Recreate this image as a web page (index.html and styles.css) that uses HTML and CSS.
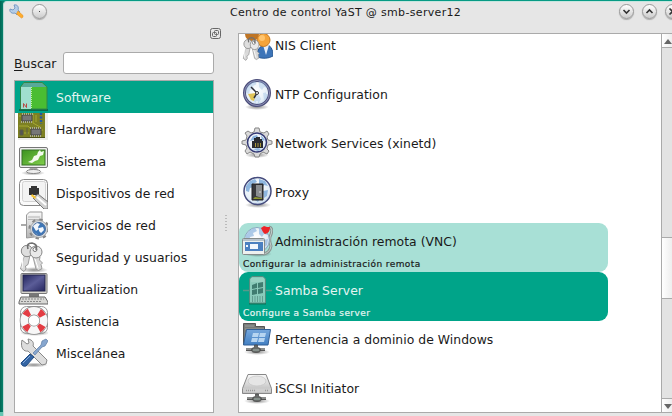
FILE: index.html
```html
<!DOCTYPE html>
<html lang="es">
<head>
<meta charset="utf-8">
<title>Centro de control YaST</title>
<link rel="stylesheet" href="styles.css">
</head>
<body>
<svg class="defs" aria-hidden="true">
  <defs>
    <linearGradient id="metal" x1="0" y1="0" x2="0" y2="1"><stop offset="0" stop-color="#fafafa"/><stop offset="1" stop-color="#b4b4b4"/></linearGradient>
    <linearGradient id="green" x1="0" y1="0" x2="1" y2="1"><stop offset="0" stop-color="#3c9220"/><stop offset="1" stop-color="#82cf4b"/></linearGradient>
    <linearGradient id="navy" x1="0" y1="0" x2="1" y2="1"><stop offset="0" stop-color="#22245c"/><stop offset=".5" stop-color="#5b5d98"/><stop offset="1" stop-color="#25265f"/></linearGradient>
    <linearGradient id="sky" x1="0" y1="0" x2="0" y2="1"><stop offset="0" stop-color="#76a7dc"/><stop offset="1" stop-color="#4380c3"/></linearGradient>
    <radialGradient id="shadow"><stop offset="0" stop-color="#000" stop-opacity=".45"/><stop offset="1" stop-color="#000" stop-opacity="0"/></radialGradient>
    <radialGradient id="globe" cx=".45" cy=".4" r=".75"><stop offset="0" stop-color="#fff"/><stop offset=".6" stop-color="#e6eff7"/><stop offset="1" stop-color="#a5c4e4"/></radialGradient>
    <g id="keys">
      <path d="M9 12 4.500 28 8 30.500 10 28 9.500 25 12 23.500 14 14zM16 12l4 16 2.500 1.500 3.500-2-1-4 1.500-1.500-3-3 .5-3-2.500-5z" fill="#d9d9d9" stroke="#888" stroke-width=".8"/>
      <path d="M7 15 6 27M18 15l4 12" stroke="#fff"/>
      <circle cx="11" cy="10" r="5.700" fill="#dedede" stroke="#888"/><circle cx="20" cy="11" r="6" fill="#e9e9e9" stroke="#888"/>
      <circle cx="19" cy="8.500" r="2" fill="#fff" stroke="#777"/><path d="M12 8q-2-6 4-6 6 1 4 7" fill="none" stroke="#707070" stroke-width="1.700"/>
    </g>
    <g id="land" fill="#8eb6df"><path d="M5 12l4-5 5-2 2 3-4 2 1 3-4 1-1 4-3-1zM18 5l6 2 3 5-4-1-2 3-3-3zM11 20l7-1 2 4-3 5-5-3zM22 17l5-1-1 6-3 2z"/></g>
    <g id="plug"><path d="M7 28.500h19" stroke="#555" stroke-width="3"/><path d="M7 28h19" stroke="#c5c9c6"/><path d="M15.500 24h3v2.500q3 0 3 2.500t-4.500 2.500-4.500-2.500 3-2.500z" fill="#676b69" stroke="#444" stroke-width=".7"/><path d="M14 29h6" stroke="#a4b5ad"/></g>
  </defs>
</svg>
<div class="desktop">
<main class="window">
  <header class="titlebar">
    <svg class="app-icon" viewBox="0 0 16 16"><path d="M1 5l3 1 2-2-1-3c4-1 5 3 4 5l2 2-3 3-2-2C3 10 0 8 1 5z" fill="#b5cde7" stroke="#668dbb" stroke-width=".8"/><path d="M9 7l5 4.500q.5 2-1.500 2.500L7.500 10z" fill="#ffad2d" stroke="#e88d16" stroke-width=".6"/></svg>
    <span class="round-button"><i class="dot"></i></span>
    <h1>Centro de control YaST @ smb-server12</h1>
    <span class="round-button minimize"><svg viewBox="0 0 15 15"><path d="M4.500 6l3 3 3-3"/></svg></span>
    <span class="round-button maximize"><svg viewBox="0 0 15 15"><path d="M4.500 9l3-3 3 3"/></svg></span>
    <span class="round-button close"><svg viewBox="0 0 15 15"><path d="M4.500 4.500l6 6M10.500 4.500l-6 6"/></svg></span>
  </header>
  <div class="content">
    <aside class="sidebar">
      <div class="dock"><svg viewBox="0 0 11 11"><rect x=".5" y=".5" width="10" height="10" rx="2"/><rect x="4.500" y="2.500" width="4" height="4" rx="1"/><rect x="2.500" y="4.500" width="4" height="4" rx="1"/></svg></div>
      <label class="search"><span class="search-label"><u>B</u>uscar</span><input type="text"></label>
      <ul class="groups">
        <li class="active"><svg viewBox="0 0 32 32"><path d="M3 28h30v2H3z" fill="#086b4d"/><path d="M4.500 6 8 1.500h18L31 6v22H4.500z" fill="#4abd32" stroke="#318647"/><path d="M5 6 8 2h18l4.500 4z" fill="#59a999"/><path d="M5 6h10v22H5z" fill="#a0dfce"/><path d="M15.500 6v22" stroke="#c4ee9b" stroke-dasharray="1 1"/><path d="M7.500 26.500v-4l3 4v-4" fill="none" stroke="#b74c45"/></svg>Software</li>
        <li><svg viewBox="0 0 32 32"><path d="M2 0h30v27H2z" fill="#ededea"/><path d="M2 0h27v25H2z" fill="#7d8023"/><path d="M3 13h9l4 4h11M17 1v9l7 4M3 3h2M20 2v7M13 20H8" stroke="#a7aa32" fill="none"/><path d="M2 24.500h27" stroke="#4e5219"/><path d="M6 2h10v6H6zM15 16h10v6H15z" fill="#777" stroke="#444"/><path d="M6 1h11M5 9h11M14 15h12M14 23h12" stroke="#bbb" stroke-width="1.500" stroke-dasharray="1 1"/><path d="M25 0v11" stroke="#2457a2" stroke-width="2.500" stroke-dasharray="2 1.500"/><path d="M4 17h3v5H4zM11 15v6" fill="#555" stroke="#5d5d42"/></svg>Hardware</li>
        <li><svg viewBox="0 0 32 32"><ellipse cx="17" cy="28" rx="12" ry="2.500" fill="url(#shadow)"/><path d="M14 22h7l1 4H13z" fill="#aaa"/><ellipse cx="17.500" cy="26.500" rx="7" ry="2" fill="#eee" stroke="#888"/><rect x="3.500" y="2.500" width="28" height="20" rx="1.500" fill="#eee" stroke="#777"/><rect x="6" y="5" width="23" height="15" fill="url(#green)" stroke="#367127"/><path d="M12 17l4-2 2-4 3-1 1-3 2-2 1 2 3-1-1 4-3 1-2 4-3 1-3 2z" fill="#f4fbef"/></svg>Sistema</li>
        <li><svg viewBox="0 0 32 32"><rect x="3.500" y="2.500" width="28" height="26" rx="4" fill="#fafafa" stroke="#888"/><rect x="6.500" y="4.500" width="23" height="20" rx="2" fill="#f3f3f3" stroke="#d2d2d2"/><path d="M13 18v-7h2V9h6v2h2v7z" fill="#333"/><path d="m17 21 5-4 10 8v7h-4z" fill="#d0d0d0" stroke="#777"/><path d="m21 20 9 8" stroke="#fff" stroke-width="2"/><path d="m15 19 4 3 1-2-4-3z" fill="#f7c635"/></svg>Dispositivos de red</li>
        <li><svg viewBox="0 0 32 32"><path d="M5 16h8" stroke="#aaa" stroke-width="2"/><path d="M10.500 29V6l3-3H26v24z" fill="url(#metal)" stroke="#999"/><path d="M12 8h12M12 10.500h12M12 18h9" stroke="#b5b5b5"/><circle cx="23" cy="20" r="9" fill="#d5d7da" stroke="#888" stroke-width="3" stroke-dasharray="3.200 3.870"/><circle cx="23" cy="20" r="8.500" fill="#d9dde2" stroke="#999" stroke-width=".7"/><circle cx="23" cy="20" r="6.500" fill="#3d76b7" stroke="#4f71a0"/><path d="m17 17 4-3 3 1-2 3 1 2-3 2zM23 19l4-1 1 3-3 3-2-2zM18 23l3 2 1 1" fill="#f1f6fc"/></svg>Servicios de red</li>
        <li><svg viewBox="0 0 32 32"><ellipse cx="18" cy="29" rx="14" ry="3" fill="url(#shadow)"/><use href="#keys"/></svg>Seguridad y usuarios</li>
        <li><svg viewBox="0 0 32 32"><path d="M13 20h10v4H13z" fill="#777"/><rect x="5" y=".5" width="26" height="20" rx="1" fill="#d6d4cc" stroke="#777"/><rect x="7" y="2" width="22" height="16" fill="url(#navy)" stroke="#22244c"/><path d="M5 24h24l3 5v2H3v-2z" fill="#d8d8d5" stroke="#666"/><path d="M6 26h22M5 28.500h20" stroke="#888" stroke-dasharray="2 1"/></svg>Virtualization</li>
        <li><svg viewBox="0 0 32 32"><ellipse cx="19" cy="28" rx="15" ry="3" fill="url(#shadow)"/><rect x="4.500" y="1.500" width="27" height="27" rx="6" fill="none" stroke="#999"/><circle cx="18" cy="15.500" r="9.800" fill="none" stroke="#8c8c8c" stroke-width="9"/><circle cx="18" cy="15.500" r="9.800" fill="none" stroke="#f7f7f7" stroke-width="7.500"/><circle cx="18" cy="15.500" r="9.800" fill="none" stroke="#e33c43" stroke-width="7" stroke-dasharray="5.400 9.994" stroke-dashoffset="-5"/></svg>Asistencia</li>
        <li><svg viewBox="0 0 32 32"><ellipse cx="18" cy="28" rx="14" ry="2.500" fill="url(#shadow)"/><path d="m6 3 5 4 2-1-1-4c5 1 6 4 5 7l14 14-1 4-4 1-14-14C8 15 4 11 6 3z" fill="#ddd" stroke="#888"/><path d="m17 16 8-8 1-4 4-2 2 2-3 5-3 1-7 8z" fill="#86a6cf" stroke="#5f7da3" stroke-width=".7"/><path d="m14 17 4 3-8 9q-4 1-5-3z" fill="#3465a4" stroke="#204b83"/><path d="m14 19-7 7" stroke="#86abdc"/></svg>Miscelánea</li>
      </ul>
    </aside>
    <div class="splitter"><i></i></div>
    <section class="panel">
      <ul class="modules">
        <li><div class="module-title"><svg viewBox="0 0 32 34"><circle cx="11" cy="7" r="7" fill="#bf7525"/><path d="M16 30q0-12 9-12 7 0 7 11-7 4-16 1z" fill="#3c74b8" stroke="#285893"/><path d="m22 18 3 10 3-10z" fill="#e7eef8"/><circle cx="22.500" cy="13" r="6.500" fill="#f5a43a" stroke="#c77a20"/><circle cx="21" cy="11" r="3" fill="#ffc46d"/><g transform="translate(-1 9) scale(.73 .8)"><use href="#keys"/></g></svg><span>NIS Client</span></div></li>
        <li><div class="module-title"><svg viewBox="0 0 32 34"><ellipse cx="16" cy="31" rx="12" ry="3" fill="url(#shadow)"/><circle cx="16" cy="17" r="12.500" fill="url(#globe)" stroke="#4c4f7b" stroke-width="3"/><circle cx="16" cy="17" r="12.500" fill="none" stroke="#9093b8"/><use href="#land" opacity=".35"/><path d="m15 17-8 1 3 6 3 1z" fill="#dfc357"/><path d="m10 11 6 6-3 5" fill="none" stroke="#303039" stroke-width="1.500"/><circle cx="16" cy="17" r="1.500" fill="#fff" stroke="#333"/><path d="M16 7v2M16 25v2M25 17h2" stroke="#fff"/></svg><span>NTP Configuration</span></div></li>
        <li><div class="module-title"><svg viewBox="0 0 32 34"><ellipse cx="16" cy="30" rx="12" ry="3" fill="url(#shadow)"/><path d="m13 7 1-4h4l1 4 4 1 3-2 2 3-2 3 1 3 4 1v3l-4 1-1 4 2 2-2 3-4-2-3 2-1 3h-4l-1-3-4-2-3 2-2-3 2-3-1-3-4-1v-3l4-1 1-4-2-3 3-2 3 2z" fill="#dadada" stroke="#858585"/><circle cx="16" cy="17.500" r="9.500" fill="url(#globe)" stroke="#343974" stroke-width="1.500"/><path d="m9 16 3-5 4-1 1 2-4 3zM20 10l4 5-3 1zM12 24l5-1 3 1-3 2z" fill="#8eb6df"/><path d="M11 23v-7h2v-3h2v-1h4v2h2v2h1v7z" fill="#282b30"/><path d="M14.500 18v4M17 18v4M19.500 18v4" stroke="#a7973c"/></svg><span>Network Services (xinetd)</span></div></li>
        <li><div class="module-title"><svg viewBox="0 0 32 34"><ellipse cx="17" cy="31" rx="13" ry="3" fill="url(#shadow)"/><circle cx="16.500" cy="17" r="13.500" fill="url(#globe)" stroke="#464c7d" stroke-width="1.500"/><use href="#land"/><path d="M11 10h11v16H11z" fill="#38393d" stroke="#242526"/><path d="m15 11 6 0v13l-6-2z" fill="#8a8d90"/><path d="m14 23 7 1v1h-9z" fill="#8d9731"/><path d="M19 17v2" stroke="#ddd"/></svg><span>Proxy</span></div></li>
        <li class="hover"><div class="module-title"><svg viewBox="0 0 32 34"><ellipse cx="17" cy="31" rx="14" ry="3" fill="url(#shadow)"/><path d="M28 4q5 1 1 10-1 4 1 9-1 7-8 8" fill="none" stroke="#8a9793" stroke-width="3"/><path d="M28 4q5 1 1 10-1 4 1 9-1 7-8 8" fill="none" stroke="#c2cecb"/><circle cx="16" cy="17" r="12.500" fill="url(#globe)" stroke="#88a6bd"/><use href="#land" opacity=".7"/><path d="m20 5 3-2 3 1 3 0q0 6-5 7-2-1-4-6z" fill="#ec2428"/><rect x="1.500" y="15.500" width="22" height="16" rx="1" fill="#edf0ef" stroke="#858c8c"/><path d="M2 17h21" stroke="#8296aa"/><path d="M4 19h18v9H4z" fill="#4c80c0"/><path d="M5 22h2v2H5zM9 21h8v5H9z" fill="#f3f7fd"/></svg><span>Administración remota (VNC)</span></div><p>Configurar la administración remota</p></li>
        <li class="selected"><div class="module-title"><svg viewBox="0 0 32 34"><path d="M2 18.500h7M24 18.500h7" stroke="#56998b" stroke-width="1.500"/><path d="M8 31h17" stroke="#087257" stroke-width="3"/><path d="m8.500 7 2.500-2.500h11L24.500 7v24h-16z" fill="#8acbbb" stroke="#558d80"/><path d="M10 7h13M10 9h13" stroke="#a6d9cb"/><path d="m11 13 5-2v5l-5 1zM17 11l5-1v5l-5 1zM11 18l5-1v5l-5 1zM17 17l5-1v5l-5 1z" fill="#3f7c70"/><path d="M11.500 24v6M14 24v6M16.500 24v6M19 24v6M21.500 24v6" stroke="#639d90"/></svg><span>Samba Server</span></div><p>Configure a Samba server</p></li>
        <li><div class="module-title"><svg viewBox="0 0 32 34"><ellipse cx="16" cy="31" rx="13" ry="3" fill="url(#shadow)"/><path d="M2.500 24V2.500h12v3h9V12" fill="#777b79" stroke="#555"/><path d="M4 5h9M4 8h19" stroke="#9a9d9b"/><path d="M5.500 8.500h24L27 24H2.500z" fill="url(#sky)" stroke="#315f96"/><path d="m12 12 6 0-1 4h-6zM19 12h6l-1 4h-6zM11 17h6l-1 4h-6zM18 17h6l-1 4h-6z" fill="#b7d5f1"/><g transform="translate(-2 0)"><use href="#plug"/></g></svg><span>Pertenencia a dominio de Windows</span></div></li>
        <li><div class="module-title"><svg viewBox="0 0 32 34"><ellipse cx="16" cy="31" rx="13" ry="3" fill="url(#shadow)"/><path d="m7 4.500h18l5.500 14v5H1.500v-5z" fill="url(#metal)" stroke="#888"/><ellipse cx="16" cy="11" rx="9" ry="5" fill="#e5e5e5" stroke="#c4c4c4" stroke-width=".7"/><path d="M2 18.500h28v4H2z" fill="#cfcfcf"/><path d="M5 20.500h9M24 20.500h4" stroke="#999" stroke-width="1.500" stroke-dasharray="1 1"/><g transform="translate(-1 0)"><use href="#plug"/></g></svg><span>iSCSI Initiator</span></div></li>
      </ul>
      <div class="scrollbar">
        <div class="arrow"><svg viewBox="0 0 8 5"><path d="M0 5 4 0l4 5z"/></svg></div>
        <div class="track-top"></div><div class="thumb"></div><div class="track-bottom"></div>
        <div class="arrow down"><svg viewBox="0 0 8 5"><path d="M0 0 4 5l4-5z"/></svg></div>
      </div>
    </section>
  </div>
</main>
</div>
</body>
</html>
```
FILE: styles.css
```css
* { box-sizing: border-box; }
body { margin: 0; width: 672px; height: 416px; overflow: hidden; font: 12.4px "DejaVu Sans", sans-serif; letter-spacing: .03px; color: #1a1a1a; }
ul, h1, p { margin: 0; padding: 0; list-style: none; }
svg { display: block; flex: none; }
.defs { width: 0; height: 0; position: absolute; }
.desktop { width: 672px; height: 416px; padding: 1px 0 0 3px; background: linear-gradient(#079a84 0 1px, transparent 1px 412px, #66c5b2 412px), linear-gradient(90deg, #006653, #07806b 3px, #079a84 12px); }
.window { height: 415px; overflow: hidden; background: #e6e6e6; border-top: 1px solid #c5e6df; border-left: 1px solid #bad9d3; border-radius: 4px 0 0; }
.titlebar { height: 22px; display: flex; align-items: flex-start; padding: 2px 0 0 5px; }
.app-icon { width: 16px; height: 16px; }
.round-button { flex: none; display: block; width: 15px; height: 15px; margin: 0 0 0 7px; border-radius: 50%; background: linear-gradient(#fff, #ccc); border: 1px solid #999; box-shadow: 0 1px 1px #aaa; }
.round-button svg { width: 15px; height: 15px; margin: -1px; fill: none; stroke: #333; stroke-width: 1.6; }
.dot { display: block; width: 1px; height: 1px; margin: 6px; background: #444; }
h1 { flex: none; width: 231px; margin-left: 183px; font-size: 11px; letter-spacing: .33px; line-height: 17px; font-weight: 400; white-space: nowrap; }
.round-button.minimize { margin-left: 158px; }
.round-button.maximize, .round-button.close { margin-left: 8px; }
.content { display: flex; height: 391px; padding-left: 10px; }
.sidebar { width: 200px; padding-top: 4px; }
.dock { height: 24px; display: flex; justify-content: flex-end; }
.dock svg { width: 11px; height: 11px; margin-right: -7px; fill: none; stroke: #666; }
.search { display: flex; height: 22px; align-items: center; }
.search-label { width: 49px; }
u { text-underline-offset: 2px; }
input { width: 151px; height: 22px; border: 1px solid #aaa; border-radius: 3px; background: #fff; outline: none; }
.groups { height: 333px; margin-top: 6px; border: 1px solid #aaa; background: #fff; }
.groups li { height: 32px; display: flex; align-items: center; gap: 8px; padding-left: 1px; white-space: nowrap; }
.groups svg { width: 32px; height: 32px; }
.groups .active { background: #00a489; color: #e4f5f2; }
.splitter { width: 24px; padding: 191px 0 0 11px; }
.splitter i { display: block; width: 2px; height: 17px; background: repeating-linear-gradient(#bbb 0 1px, transparent 1px 3px); }
.panel { flex: 1; height: 380px; margin-top: 9px; display: flex; border: 1px solid #aaa; border-right: 0; background: #fff; overflow: hidden; }
.modules { width: 422px; margin-top: -7px; }
.modules li { width: 369px; height: 49px; border-radius: 9px; }
.module-title { height: 34px; display: flex; align-items: center; gap: 2px; padding-left: 2px; white-space: nowrap; }
.module-title svg { width: 32px; height: 34px; }
.module-title span { padding-top: 2px; }
.modules p { padding: 1px 0 0 4px; font-size: 9px; letter-spacing: .41px; line-height: 13px; white-space: nowrap; }
.modules .hover { background: #a8e0d6; }
.modules .selected { background: #00a489; color: #e4f5f2; }
.modules .hover p { -webkit-text-stroke: .2px #1a1a1a; }
.modules .selected p { -webkit-text-stroke: .2px #e4f5f2; }
.scrollbar { width: 11px; border-left: 1px solid #aaa; background: #e3e3e3; display: flex; flex-direction: column; }
.arrow { height: 14px; border-bottom: 1px solid #aaa; background: linear-gradient(90deg, #fff, #eee); padding: 5px 0 0 2px; }
.arrow svg { width: 8px; height: 5px; fill: #666; }
.down { height: 14px; border-top: 1px solid #aaa; border-bottom: 0; }
.track-top { height: 189px; }
.thumb { height: 62px; border: solid #aaa; border-width: 1px 0; background: linear-gradient(90deg, #fff, #eee); }
.track-bottom { flex: 1; }
```
